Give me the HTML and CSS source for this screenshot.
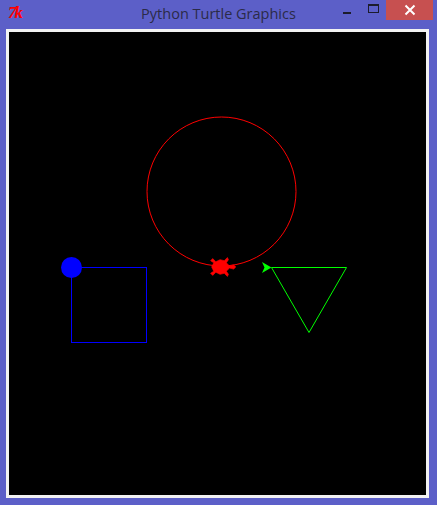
FILE: index.html
```html
<!DOCTYPE html>
<html>
<head>
<meta charset="utf-8">
<link rel="stylesheet" href="styles.css">
</head>
<body>
<div class="window">
  <div class="titlebar">
    <div class="appicon">7k</div>
    <div class="title">Python Turtle Graphics</div>
    <div class="controls">
      <div class="btn min"><span class="dash"></span></div>
      <div class="btn max"><span class="box"></span></div>
      <div class="btn close">
        <svg width="12" height="12" viewBox="0 0 12 12"><path d="M1.5 1.5 L10.5 10.5 M10.5 1.5 L1.5 10.5" stroke="#fff" stroke-width="2"/></svg>
      </div>
    </div>
  </div>
  <div class="frame">
    <div class="canvas">
      <svg width="417" height="463" viewBox="9 32 417 463">
        <circle cx="221.5" cy="191.5" r="74.5" fill="none" stroke="#ff0000" stroke-width="1"/>
        <rect x="71.5" y="267.5" width="75" height="75" fill="none" stroke="#0000ff" stroke-width="1"/>
        <circle cx="71.5" cy="267.5" r="10.5" fill="#0000ff"/>
        <polygon points="271.5,267.5 346.5,267.5 309,332.5" fill="none" stroke="#00ff00" stroke-width="1"/>
        <polygon points="271.5,267.5 262,262 264.5,267.5 262,273" fill="#00ff00"/>
        <g transform="translate(219 267) rotate(90) scale(1.05)">
          <polygon fill="#ff0000" stroke="#ff0000" stroke-width="0.6" points="0,16 -2,14 -1,10 -4,7 -7,9 -9,8 -6,5 -7,1 -5,-3 -8,-6 -6,-8 -4,-5 0,-7 4,-5 6,-8 8,-6 5,-3 7,1 6,5 9,8 7,9 4,7 1,10 2,14" transform="scale(1,-1)"/>
        </g>
      </svg>
    </div>
  </div>
</div>
</body>
</html>
```
FILE: styles.css
```css
html, body {
  margin: 0;
  padding: 0;
  background: #5c5fc8;
}
.window {
  width: 437px;
  height: 505px;
  background: #5c5fc8;
  display: flex;
  flex-direction: column;
}
.titlebar {
  height: 29px;
  display: flex;
  align-items: flex-start;
  position: relative;
}
.appicon {
  margin: 5px 0 0 8px;
  font-family: "Liberation Serif", serif;
  font-style: italic;
  font-weight: bold;
  font-size: 17px;
  color: #ff0000;
  letter-spacing: -2px;
  line-height: 15px;
}
.title {
  position: absolute;
  left: 0;
  right: 0;
  top: 4px;
  text-align: center;
  font-family: "Open Sans", sans-serif;
  font-size: 14.5px;
  color: #2b2b48;
  line-height: 20px;
}
.controls {
  margin-left: auto;
  margin-right: 4px;
  display: flex;
  align-items: flex-start;
}
.btn {
  height: 20px;
  display: flex;
  align-items: center;
  justify-content: center;
}
.min {
  width: 26px;
}
.dash {
  width: 8px;
  height: 2px;
  background: #1c1c2c;
  margin-top: 5px;
}
.max {
  width: 26px;
}
.box {
  width: 9px;
  height: 6px;
  border: 1px solid #1c1c2c;
  border-top-width: 2px;
  margin-top: -3px;
}
.close {
  width: 47px;
  background: #c75050;
}
.frame {
  margin-left: 6px;
  width: 417px;
  height: 463px;
  border: 3px solid #f2f2f2;
  box-shadow: inset 0 0 0 1px #9a9a9a;
  background: #000;
}
.canvas {
  width: 417px;
  height: 463px;
  background: #000;
}
.canvas svg {
  display: block;
}
```
